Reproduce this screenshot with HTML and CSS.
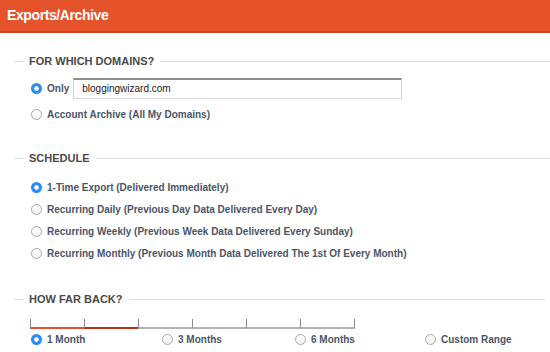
FILE: index.html
```html
<!DOCTYPE html>
<html lang="en">
<head>
    <meta charset="UTF-8">
    <meta name="viewport" content="width=device-width, initial-scale=1.0">
    <title>Exports/Archive</title>
    <link rel="stylesheet" href="styles.css">
</head>
<body>
    <div class="top-bar">Exports/Archive</div>

    <!-- Domains -->
    <fieldset class="group group-first">
        <legend>FOR WHICH DOMAINS?</legend>
        <div class="row row-domain">
            <span class="radio checked"></span>
            <span class="label">Only</span>
            <div class="text-box">bloggingwizard.com</div>
        </div>
        <div class="row">
            <span class="radio"></span>
            <span class="label">Account Archive (All My Domains)</span>
        </div>
    </fieldset>

    <!-- Schedule -->
    <fieldset class="group">
        <legend>SCHEDULE</legend>
        <div class="row">
            <span class="radio checked"></span>
            <span class="label">1-Time Export (Delivered Immediately)</span>
        </div>
        <div class="row">
            <span class="radio"></span>
            <span class="label">Recurring Daily (Previous Day Data Delivered Every Day)</span>
        </div>
        <div class="row">
            <span class="radio"></span>
            <span class="label">Recurring Weekly (Previous Week Data Delivered Every Sunday)</span>
        </div>
        <div class="row">
            <span class="radio"></span>
            <span class="label">Recurring Monthly (Previous Month Data Delivered The 1st Of Every Month)</span>
        </div>
    </fieldset>

    <!-- Range -->
    <fieldset class="group group-last">
        <legend>HOW FAR BACK?</legend>
        <div class="slider">
            <span class="seg fill-1"></span>
            <span class="seg fill-2"></span>
            <span class="seg"></span>
            <span class="seg"></span>
            <span class="seg"></span>
            <span class="seg"></span>
        </div>
        <div class="range-options">
            <div class="row"><span class="radio checked"></span><span class="label">1 Month</span></div>
            <div class="row"><span class="radio"></span><span class="label">3 Months</span></div>
            <div class="row"><span class="radio"></span><span class="label">6 Months</span></div>
            <div class="row"><span class="radio"></span><span class="label">Custom Range</span></div>
        </div>
    </fieldset>
</body>
</html>
```

FILE: styles.css
```css
body {
    font-family: "Liberation Sans", Arial, sans-serif;
    margin: 0;
    background: #fff;
    overflow: hidden;
}
.top-bar {
    background-color: #e4532a;
    border-bottom: 2px solid #cf4220;
    color: #fff;
    font-size: 14px;
    font-weight: bold;
    letter-spacing: -0.4px;
    height: 31px;
    line-height: 31px;
    padding-left: 7px;
}
.group {
    border: 0;
    border-top: 1px solid #dedede;
    margin: 27px 0 0 14px;
    padding: 12px 0 0 17px;
}
.group-first {
    margin-top: 22px;
    padding-top: 10px;
}
.group legend {
    color: #4a4a4a;
    font-size: 11px;
    font-weight: bold;
    padding: 0 6px 0 5px;
    margin-left: -7px;
}
.group-last {
    margin-top: 29px;
    margin-right: 15px;
    padding-top: 7px;
}
.row {
    display: flex;
    align-items: center;
    height: 22px;
}
.row-domain {
    margin-bottom: 4px;
}
.label {
    color: #4b5567;
    font-size: 10px;
    font-weight: bold;
    margin-left: 5px;
}
.radio {
    width: 11px;
    height: 11px;
    box-sizing: border-box;
    border-radius: 50%;
    border: 1px solid #a9a9a9;
    background: linear-gradient(#fff, #f1f1f1);
    flex-shrink: 0;
}
.radio.checked {
    border: 0;
    background: radial-gradient(circle, #fff 0 2px, #2d8cf3 2.5px);
}
.text-box {
    width: 329px;
    height: 21px;
    box-sizing: border-box;
    margin-left: 4px;
    border: 1px solid #d6d6d6;
    border-top: 2px solid #8e8e8e;
    padding-left: 8px;
    line-height: 18px;
    font-size: 10px;
    color: #222;
}
.slider {
    display: flex;
    margin-top: 7px;
    margin-left: -1px;
}
.seg {
    width: 53px;
    height: 8px;
    border-left: 1px solid #8a8a8a;
    border-bottom: 2px solid #b3b3b3;
}
.seg:last-child {
    border-right: 1px solid #8a8a8a;
}
.fill-1 {
    border-bottom-color: #e4532a;
}
.fill-2 {
    border-bottom-color: #b8300f;
}
.range-options {
    display: grid;
    grid-template-columns: 131px 133px 130px 120px;
    margin-top: -1px;
}
```
